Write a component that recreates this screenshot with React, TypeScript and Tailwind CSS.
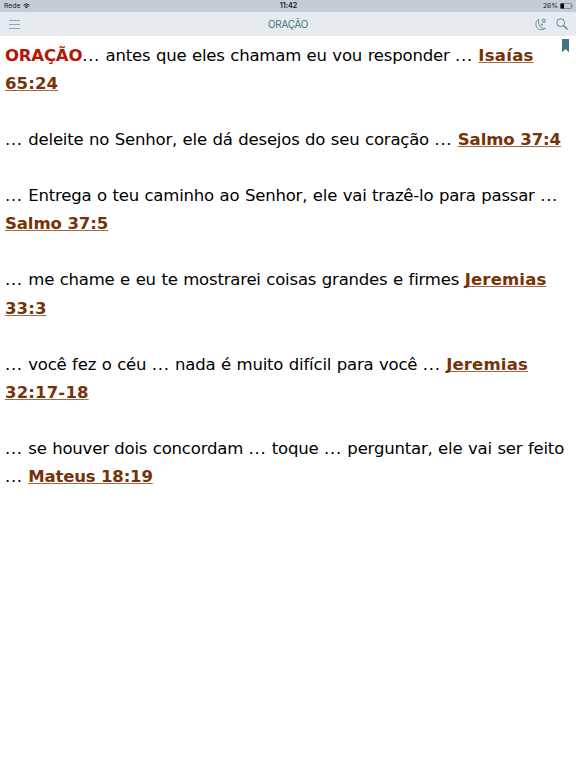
import type { ReactNode } from "react";

interface Verse {
  lines: ReactNode[];
}

const verses: Verse[] = [
  {
    lines: [
      <>
        <b className="text-[#b31708] tracking-[-0.2px]">ORAÇÃO</b>
        <Dots /> antes que eles chamam eu vou responder <Dots />{" "}
        <Ref className="tracking-[0.25px]">Isaías</Ref>
      </>,
      <Ref className="tracking-[0.1px]">65:24</Ref>,
    ],
  },
  {
    lines: [
      <>
        <Dots /> deleite no Senhor, ele dá desejos do seu coração <Dots />{" "}
        <Ref className="tracking-[-0.1px]">Salmo 37:4</Ref>
      </>,
    ],
  },
  {
    lines: [
      <>
        <Dots /> Entrega o teu caminho ao Senhor, ele vai trazê-lo para passar{" "}
        <Dots />
      </>,
      <Ref className="tracking-[-0.1px]">Salmo 37:5</Ref>,
    ],
  },
  {
    lines: [
      <>
        <Dots /> me chame e eu te mostrarei coisas grandes e firmes{" "}
        <Ref className="tracking-[0.16px]">Jeremias</Ref>
      </>,
      <Ref className="tracking-[0.1px]">33:3</Ref>,
    ],
  },
  {
    lines: [
      <>
        <Dots /> você fez o céu <Dots /> nada é muito difícil para você{" "}
        <Dots /> <Ref className="tracking-[0.16px]">Jeremias</Ref>
      </>,
      <Ref className="tracking-[0.16px]">32:17-18</Ref>,
    ],
  },
  {
    lines: [
      <>
        <Dots /> se houver dois concordam <Dots /> toque <Dots /> perguntar, ele
        vai ser feito
      </>,
      <>
        <Dots /> <Ref className="tracking-[-0.18px]">Mateus 18:19</Ref>
      </>,
    ],
  },
];

export default function App() {
  return (
    <div className="flex h-screen flex-col overflow-hidden bg-white font-['Inter',sans-serif]">
      <StatusBar />
      <NavBar />
      <main className="relative flex-1 px-[5px] pt-[6px]">
        <BookmarkIcon />
        <div className="flex flex-col gap-[28.06px] whitespace-nowrap font-['Verdana','DejaVu_Sans',sans-serif] text-[16.52px] leading-[28.06px] tracking-[-0.2px] text-black [word-spacing:0.5px]">
          {verses.map((verse, i) => (
            <p key={i}>
              {verse.lines.map((line, j) => (
                <span key={j} className="block">
                  {line}
                </span>
              ))}
            </p>
          ))}
        </div>
      </main>
    </div>
  );
}

function Dots() {
  return <span className="tracking-[0.65px]">...</span>;
}

function Ref({
  children,
  className,
}: {
  children: ReactNode;
  className: string;
}) {
  return (
    <a
      className={`font-bold text-[#773207] underline decoration-[#a06a48] decoration-1 underline-offset-1 [text-decoration-skip-ink:none] [word-spacing:0px] ${className}`}
    >
      {children}
    </a>
  );
}

function StatusBar() {
  return (
    <div className="grid h-3 shrink-0 grid-cols-3 items-center bg-[#c2ced3] pr-[3px] pl-1 text-[6.8px] leading-3 text-[#15191b]">
      <div className="flex items-center gap-[3px]">
        <span>Rede</span>
        <svg width="7" height="6" viewBox="0 0 14 11" fill="none" stroke="currentColor" strokeWidth="2">
          <path d="M1 4a8.6 8.6 0 0 1 12 0M3.3 6.6a5.2 5.2 0 0 1 7.4 0" />
          <path d="M4.7 8a3.4 3.4 0 0 1 4.6 0L7 10.6z" fill="currentColor" stroke="none" />
        </svg>
      </div>
      <span className="text-center text-[7.2px] font-semibold">11:42</span>
      <div className="flex items-center justify-end gap-[2px]">
        <span>26%</span>
        <svg width="13" height="6" viewBox="0 0 13 6">
          <rect x="0.4" y="0.4" width="11" height="5.2" rx="0.8" fill="none" stroke="#4b5558" strokeWidth="0.6" />
          <rect x="0.6" y="0.6" width="3.4" height="4.8" fill="#000" />
          <path d="M12 2v2c.8-.2.8-1.8 0-2z" fill="#4b5558" />
        </svg>
      </div>
    </div>
  );
}

function NavBar() {
  return (
    <header className="grid h-6 shrink-0 grid-cols-3 items-center bg-[#e5ebee] pr-2 pl-[9px] text-[#437482]">
      <svg width="11" height="9" viewBox="0 0 11 9" stroke="#8aa9b3" strokeWidth="1">
        <path d="M0 .5h11M0 4.5h11M0 8.5h11" />
      </svg>
      <h1 className="pr-px text-center text-[9.9px] tracking-[-0.2px]">ORAÇÃO</h1>
      <div className="flex items-center justify-end gap-[9px]">
        <svg width="13" height="13" viewBox="0 0 13 13" fill="none" stroke="currentColor" strokeWidth="0.7">
          <path d="M5 1.1a5.6 5.6 0 1 0 6.300 9.100C6.800 11.300 3.200 6.500 5 1.100z" />
          <path d="M9.800.6l.6 1.300 1.400.2-1 1 .2 1.400-1.200-.7-1.200.7.2-1.400-1-1 1.400-.2z" />
          <circle cx="7.600" cy="6.800" r="0.7" />
        </svg>
        <svg width="12" height="12" viewBox="0 0 12 12" fill="none" stroke="currentColor" strokeWidth="0.8">
          <circle cx="4.7" cy="4.7" r="3.9" />
          <path d="M7.5 7.5l4 4" strokeWidth="1.1" />
        </svg>
      </div>
    </header>
  );
}

function BookmarkIcon() {
  return (
    <svg className="absolute top-[3px] right-[7px]" width="7" height="14" viewBox="0 0 7 14">
      <path d="M0 0h7v13.3L3.5 10 0 13.3z" fill="#437482" />
    </svg>
  );
}
